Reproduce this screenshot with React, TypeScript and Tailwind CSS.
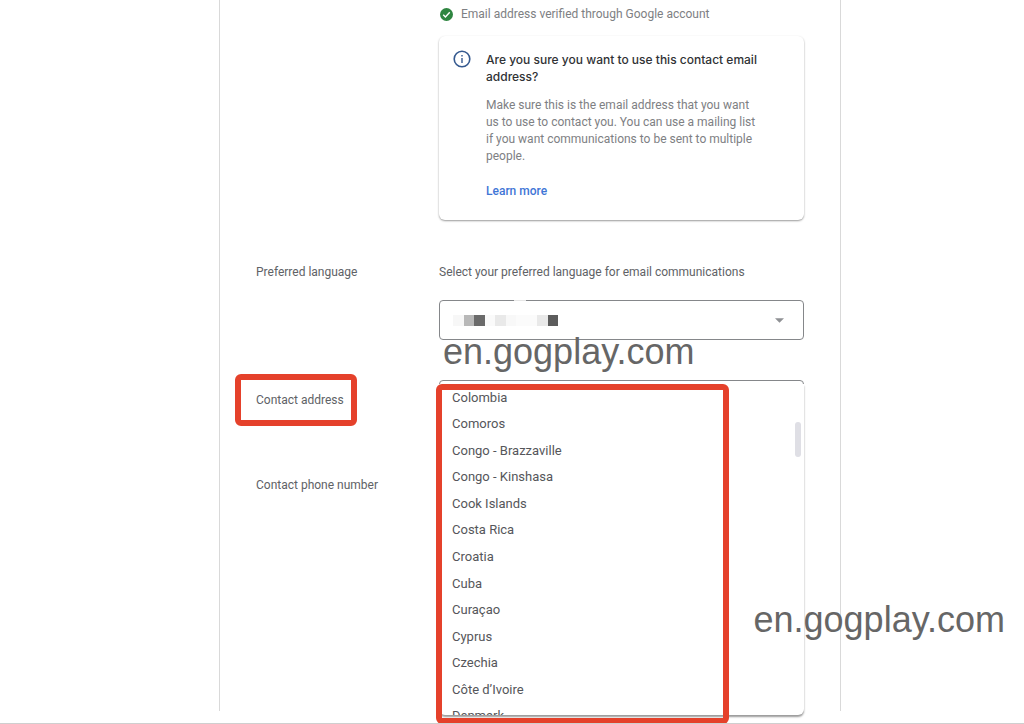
import type { ReactNode } from "react";

const countries = [
  "Colombia",
  "Comoros",
  "Congo - Brazzaville",
  "Congo - Kinshasa",
  "Cook Islands",
  "Costa Rica",
  "Croatia",
  "Cuba",
  "Curaçao",
  "Cyprus",
  "Czechia",
  "Côte d’Ivoire",
  "Denmark",
];

const mosaic = [
  "bg-[#f7f7f7]",
  "bg-[#b8b8b8]",
  "bg-[#6a6a6a]",
  "bg-[#fafafa]",
  "bg-[#e9e9e9]",
  "bg-[#f8f8f8]",
  "bg-[#fbfbfb]",
  "bg-[#fbfbfb]",
  "bg-[#e9e9e9]",
  "bg-[#5c5c5c]",
];

function CheckIcon() {
  return (
    <svg viewBox="0 0 24 24" className="size-[13px] shrink-0">
      <circle cx="12" cy="12" r="12" fill="#2e8540" />
      <path d="M6 12.5l4 4 8-8.5" fill="none" stroke="#fff" strokeWidth="2.6" />
    </svg>
  );
}

function InfoIcon() {
  return (
    <svg viewBox="0 0 18 18" className="size-[18px] shrink-0">
      <circle cx="9" cy="9" r="7.8" fill="none" stroke="#35598f" strokeWidth="1.6" />
      <path d="M9 8v5M9 5v1.6" stroke="#35598f" strokeWidth="1.4" />
    </svg>
  );
}

function Highlight({ className }: { className: string }) {
  return (
    <span
      className={`pointer-events-none absolute rounded-md border-6 border-[#e5412b] ${className}`}
    />
  );
}

function Watermark({ className }: { className: string }) {
  return (
    <span
      className={`pointer-events-none absolute font-['Liberation_Sans',sans-serif] text-[36px] leading-[44px] whitespace-nowrap text-[#666] ${className}`}
    >
      en.gogplay.com
    </span>
  );
}

type RowProps = { label: ReactNode; className?: string; children?: ReactNode };

function Row({ label, className = "", children }: RowProps) {
  return (
    <div className={`grid grid-cols-[183px_1fr] ${className}`}>
      <div>{label}</div>
      <div className="relative min-w-0">{children}</div>
    </div>
  );
}

function AddressMenu() {
  return (
    <div className="absolute inset-x-0 top-1 h-[331px] overflow-hidden rounded-b-md bg-white shadow-[0_2px_2px_rgba(0,0,0,0.4)]">
      <ul
        role="listbox"
        aria-label="Contact address"
        className="grid h-[345px] auto-rows-fr text-[13px] text-[#55565a]"
      >
        {countries.map((country) => (
          <li key={country} role="option" className="flex items-center px-[13px]">
            {country}
          </li>
        ))}
      </ul>
      <span className="absolute top-[38px] right-[3px] h-[35px] w-1.5 rounded-full bg-[#dfdfe5]" />
    </div>
  );
}

export default function App() {
  return (
    <div className="relative overflow-hidden border-b border-[#cfcfcf] bg-white pb-3 font-['Roboto',sans-serif] text-[12px] leading-[17px] text-[#606266]">
      <main className="mr-[183px] ml-[219px] border-x border-[#d9d9d9] px-9 pt-1.5 pb-[217px]">
        <Row label="">
          <p className="flex items-center gap-2 pl-px text-[#7e8083]">
            <CheckIcon />
            Email address verified through Google account
          </p>
          <section className="mt-[13px] flex gap-[15px] rounded-md bg-white px-3.5 pt-3.5 pb-5 shadow-[0_1px_2px_rgba(0,0,0,0.4)]">
            <InfoIcon />
            <div className="w-[272px] pt-px">
              <h2 className="font-['Inter',sans-serif] font-medium text-[#303235]">
                Are you sure you want to use this contact email address?
              </h2>
              <p className="mt-3 text-[#7e8083]">
                Make sure this is the email address that you want us to use to
                contact you. You can use a mailing list if you want
                communications to be sent to multiple people.
              </p>
              <a href="#learn" className="mt-[18px] block font-medium text-[#3f76d6]">
                Learn more
              </a>
            </div>
          </section>
        </Row>

        <Row
          className="mt-11"
          label={<label htmlFor="language">Preferred language</label>}
        >
          <p>Select your preferred language for email communications</p>
          <div className="relative mt-[19px]">
            <select
              id="language"
              className="block h-10 w-full appearance-none rounded border border-[#85878a] bg-white px-3"
            >
              <option value="" />
            </select>
            <span className="absolute top-0 left-[75px] h-px w-3 bg-[#e6e6e6]" />
            <div className="pointer-events-none absolute inset-y-0 left-3.5 flex w-[105px] items-center">
              {mosaic.map((shade, i) => (
                <span key={i} className={`h-[11px] flex-1 ${shade}`} />
              ))}
            </div>
            <svg
              viewBox="0 0 10 5"
              className="pointer-events-none absolute top-[18px] right-5 h-[5px] w-[9px]"
            >
              <path d="M0 0h10L5 5z" fill="#8f9194" />
            </svg>
            <Watermark className="top-[30px] left-1" />
          </div>
        </Row>

        <Row
          className="mt-10"
          label={
            <label htmlFor="address" className="relative mt-3 inline-block">
              Contact address
              <Highlight className="-top-[18px] -right-[13px] -bottom-[17px] -left-[21px]" />
            </label>
          }
        >
          <select
            id="address"
            className="block h-10 w-full appearance-none rounded border border-[#85878a] bg-white"
          >
            <option value="" />
          </select>
          <AddressMenu />
          <Highlight className="top-1 right-[75px] -left-[3px] h-[340px]" />
        </Row>

        <Row className="mt-[57px]" label="Contact phone number" />
      </main>
      <Watermark className="right-[19px] bottom-[81px]" />
    </div>
  );
}
